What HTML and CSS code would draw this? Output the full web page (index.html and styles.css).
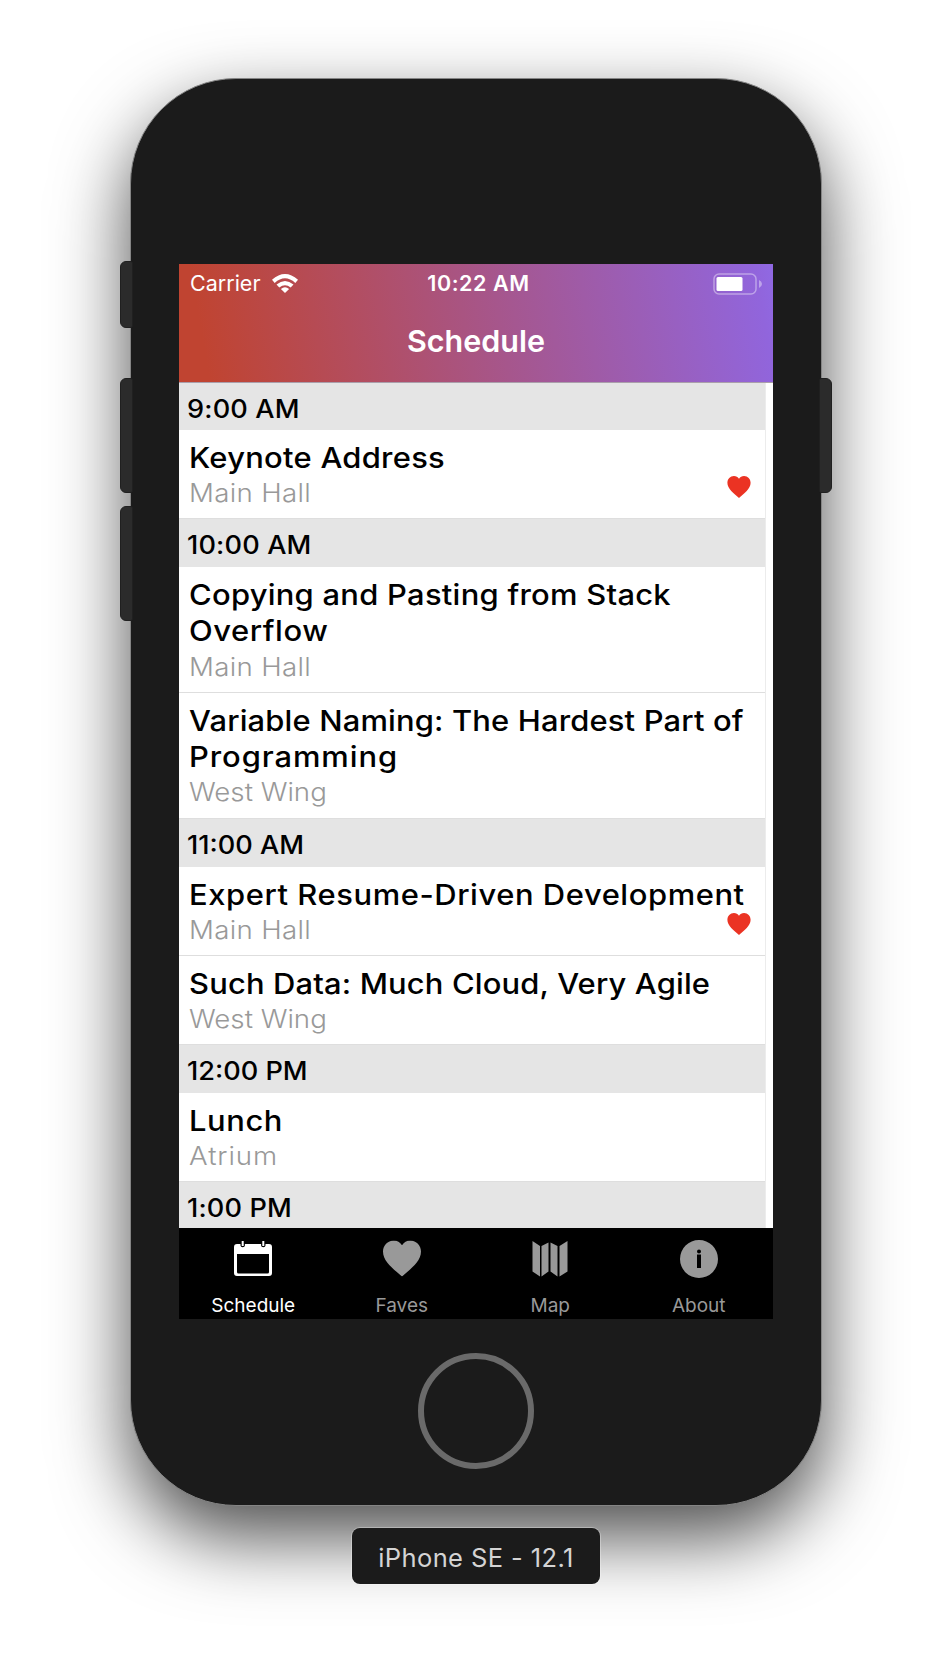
FILE: index.html
```html
<!DOCTYPE html>
<html lang="en">
<head>
<meta charset="utf-8">
<title>Schedule</title>
<link rel="stylesheet" href="styles.css">
</head>
<body>
<svg class="defs" width="0" height="0"><defs>
<symbol id="heart" viewBox="0 0 38 36"><path d="M19 4.700C17 1.600 14.300 0 10.800 0C4.600 0 0 5 0 11C0 21 10.500 28.500 19 36C27.500 28.500 38 21 38 11C38 5 33.400 0 27.200 0C23.700 0 21 1.600 19 4.700Z"/></symbol>
</defs></svg>
<main class="stage">
<div class="phone">
<i class="key key-mute"></i><i class="key key-up"></i><i class="key key-down"></i><i class="key key-power"></i>
<div class="screen">
<header class="top">
<div class="status">
<div class="carrier"><span>Carrier</span>
<svg class="wifi" viewBox="0 0 26 19"><path d="M0 5.800Q13-5.800 26 5.800L23.300 8.900Q13-.4 2.700 8.900ZM4.500 10.600Q13 3.200 21.500 10.600L18.700 13.500Q13 8.900 7.300 13.500ZM8.900 15Q13 11.700 17.100 15L13 19Z"/></svg></div>
<b class="clock">10:22 AM</b>
<svg class="battery" viewBox="0 0 50 22"><rect class="shell" x="1" y="1" width="42" height="20" rx="5"/><rect x="3.500" y="4" width="26" height="14" rx="1.500"/><path class="nub" d="M46 7Q49 8.500 49 11Q49 13.500 46 15Z"/></svg>
</div>
<h1>Schedule</h1>
</header>
<section class="list">
<h2><span>9:00 AM</span></h2>
<article><h3>Keynote Address</h3><p>Main Hall</p><svg class="fave"><use href="#heart"/></svg></article>
<h2><span>10:00 AM</span></h2>
<article><h3>Copying and Pasting from Stack<br><span class="open">Overflow</span></h3><p>Main Hall</p></article>
<article><h3><span class="snug">Variable Naming: The Hardest Part of</span><br><span class="wide">Programming</span></h3><p class="tight">West Wing</p></article>
<h2 class="tight"><span>11:00 AM</span></h2>
<article><h3 class="open">Expert Resume-Driven Development</h3><p>Main Hall</p><svg class="fave"><use href="#heart"/></svg></article>
<article><h3 class="snug">Such Data: Much Cloud, Very Agile</h3><p class="tight">West Wing</p></article>
<h2 class="tight"><span>12:00 PM</span></h2>
<article><h3 class="open">Lunch</h3><p class="wide">Atrium</p></article>
<h2><span>1:00 PM</span></h2>
</section>
<nav class="tabs">
<a class="tab active"><svg viewBox="0 0 38 38"><path fill-rule="evenodd" d="M3 4H6.500V5.500Q6.500 7.300 8.700 7.300T10.900 5.500V4H27.100V5.500Q27.100 7.300 29.300 7.300T31.500 5.500V4H35Q38 4 38 7V33Q38 36 35 36H3Q0 36 0 33V7Q0 4 3 4ZM3 14V32Q3 33.500 4.500 33.500H33.500Q35 33.500 35 32V14Z"/><path d="M7.700 1H9.700V6H7.700ZM28.300 1H30.300V6H28.300Z"/></svg><span>Schedule</span></a>
<a class="tab"><svg viewBox="0 -.5 38 38"><use href="#heart" width="38" height="36"/></svg><span>Faves</span></a>
<a class="tab"><svg viewBox="0 0 38 38"><path d="M1.500 1L9 6V36.500L1.500 31.500ZM10.500 6L17.500 2.500V31.500L10.500 36.500ZM19.500 2.500L26.500 6V36.500L19.500 31.500ZM28.500 6L36.500 1V31.500L28.500 36.500Z"/></svg><span>Map</span></a>
<a class="tab"><svg viewBox="0 0 38 38"><path fill-rule="evenodd" d="M19 0A19 19 0 1 0 19 38A19 19 0 1 0 19 0ZM17 14.500H21V28H17ZM19 9.400A2 2 0 1 1 19 13.400A2 2 0 1 1 19 9.400Z"/></svg><span>About</span></a>
</nav>
</div>
<div class="home"></div>
</div>
<div class="device">iPhone SE - 12.1</div>
</main>
</body>
</html>
```
FILE: styles.css
```css
* { box-sizing: border-box; }
body { margin: 0; background: #fff; font-family: Inter, "Liberation Sans", sans-serif; }
.defs { position: absolute; }
.stage { width: 952px; height: 1656px; padding-top: 78px; overflow: hidden; display: flex; flex-direction: column; align-items: center; }
.phone { position: relative; width: 692px; height: 1428px; flex: none; padding-top: 185px; display: flex; flex-direction: column; align-items: center; background: #1b1b1b; border: 1px solid #858585; border-radius: 106px; box-shadow: 0 31px 74px rgba(0,0,0,.7); }
.key { position: absolute; width: 13px; background: #2b2b2b; border: 1px solid #202020; border-radius: 6px 2px 2px 6px; left: -11px; }
.key-mute { top: 182px; height: 67px; }
.key-up { top: 299px; height: 115px; }
.key-down { top: 427px; height: 115px; }
.key-power { top: 299px; height: 115px; left: auto; right: -11px; border-radius: 2px 6px 6px 2px; }
.screen { width: 594px; height: 1055px; flex: none; background: #fff; display: flex; flex-direction: column; overflow: hidden; }
.top { height: 119px; flex: none; color: #fff; background: linear-gradient(80deg, #c04431 0%, #c04431 5%, #a95481 48%, #9165dc 97%, #9069e3 100%); border-bottom: 1px solid #aa9fab; }
.status { height: 39px; padding: 0 10px 0 11px; display: grid; grid-template-columns: 1fr auto 1fr; align-items: center; font-size: 21.500px; line-height: 39px; }
.carrier { display: flex; align-items: center; gap: 12px; }
.wifi { width: 26px; height: 19px; fill: #fff; }
.clock { font-weight: 600; letter-spacing: .6px; margin-left: 4px; }
.battery { width: 50px; height: 22px; fill: #fff; justify-self: end; }
.battery .shell { fill: none; stroke: #fff; stroke-opacity: .4; stroke-width: 1.500px; }
.battery .nub { fill-opacity: .4; }
h1, h2, h3, p { margin: 0; white-space: nowrap; }
h1 { font-size: 30.500px; font-weight: 600; line-height: 76px; text-align: center; }
.list { height: 845px; flex: none; width: 587px; overflow: hidden; border-right: 1px solid #ececec; }
h2 { height: 48px; padding-left: 8px; font-size: 25px; font-weight: 500; line-height: 53px; letter-spacing: .150px; background: #e5e5e5; }
h2:first-child { height: 47px; }
h2 span, h3, p { transform: scaleX(1.085); transform-origin: left; }
h2 span { display: inline-block; }
article { position: relative; height: 89px; padding: 10px 0 0 10px; border-bottom: 1px solid #dedede; }
article:has(br) { height: 125.900px; }
h3 { font-size: 28.500px; font-weight: 500; line-height: 36.300px; letter-spacing: .240px; }
p { font-size: 25.500px; font-weight: 300; line-height: 33px; letter-spacing: .280px; color: #999; }
.tight { letter-spacing: 0; }
.snug { letter-spacing: .140px; }
.open { letter-spacing: .520px; }
.wide { letter-spacing: .850px; }
.fave { position: absolute; width: 24px; height: 22px; right: 14px; top: 46px; fill: #eb3323; }
.tabs { height: 91px; flex: none; background: #000; display: grid; grid-template-columns: repeat(4, 1fr); }
.tab { color: #999; fill: #999; display: flex; flex-direction: column; align-items: center; padding-top: 12px; gap: 15px; font-size: 19px; line-height: 26px; }
.tab svg { width: 38px; height: 38px; }
.active { color: #fff; fill: #fff; }
.home { width: 116px; height: 116px; flex: none; margin-top: 34px; border: 6px solid #6a6a6a; border-radius: 50%; }
.device { width: 248px; height: 56px; flex: none; margin-top: 22px; position: relative; border-radius: 8px; background: #1b1b1b; color: #d4d4d4; text-align: center; font-size: 25.500px; line-height: 59px; letter-spacing: .4px; box-shadow: 0 0 0 1px rgba(255,255,255,.3); }
```
